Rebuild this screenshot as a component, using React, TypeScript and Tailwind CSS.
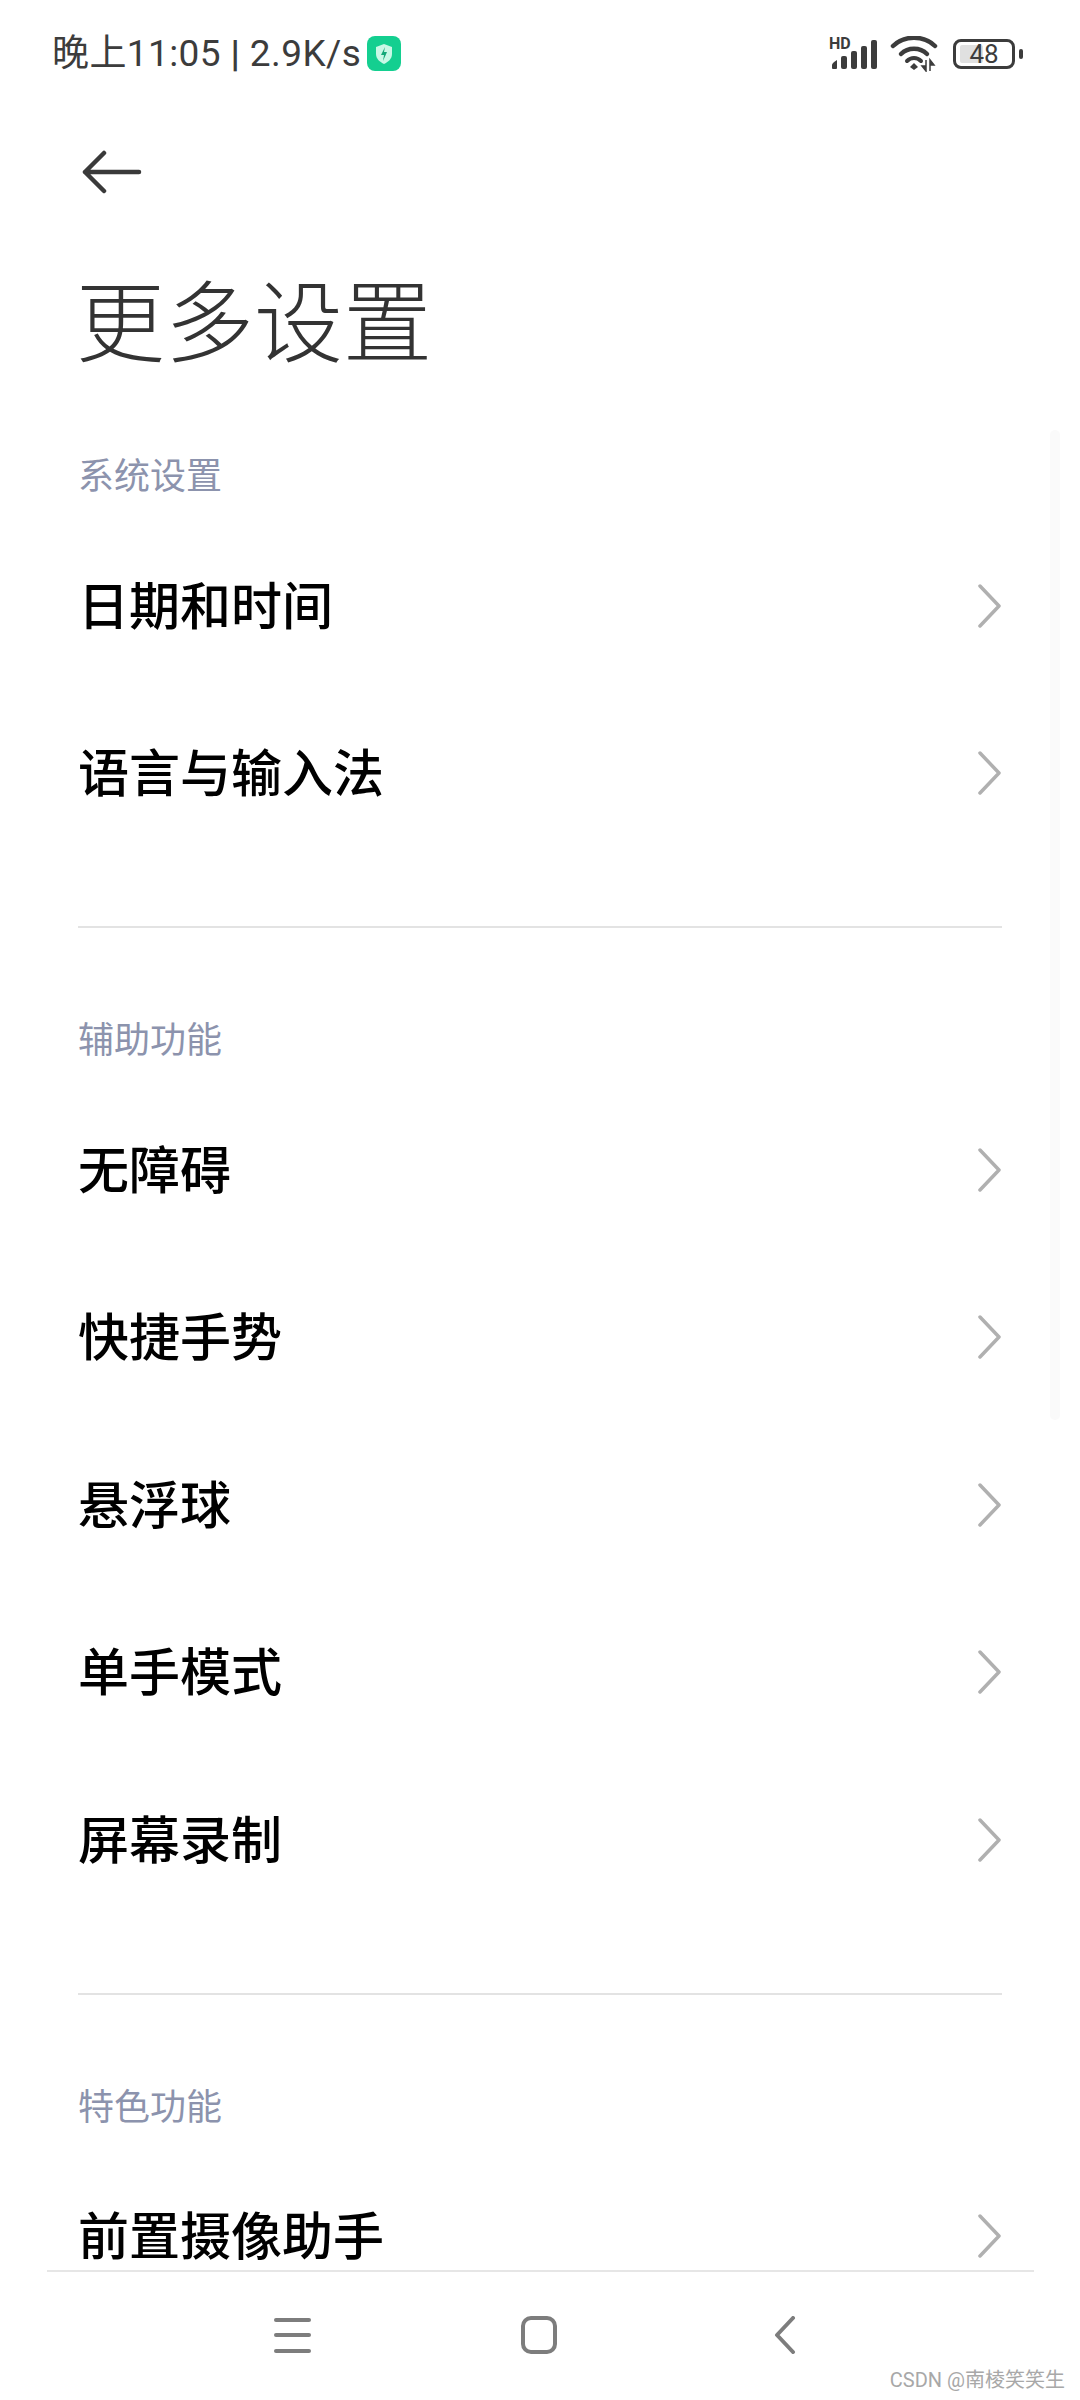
const cjk = "font-['Roboto','Noto_Sans_CJK_SC',sans-serif]";

const sections = [
  { title: '系统设置', items: ['日期和时间', '语言与输入法'] },
  { title: '辅助功能', items: ['无障碍', '快捷手势', '悬浮球', '单手模式', '屏幕录制'] },
  { title: '特色功能', items: ['前置摄像助手'] },
];

function Chevron() {
  return (
    <svg className="mb-[4px] mr-[-1px]" width="24" height="44" viewBox="0 0 24 44" fill="none">
      <path d="M2 2 L21 22 L2 42" stroke="#b0b0b0" strokeWidth="3.5" strokeLinecap="round" strokeLinejoin="round" />
    </svg>
  );
}

function StatusBar() {
  return (
    <div className="flex h-[108px] items-center justify-between pl-[52px] pr-[65px] pb-[1px] text-[#3c3c3c]">
      <div className="flex items-center">
        <span className="text-[37px] leading-none tracking-[0.4px] whitespace-pre">
          晚上11:05 <span className="font-bold">|</span> 2.9K/s
        </span>
        <svg className="ml-[6px]" width="34" height="35" viewBox="0 0 34 35">
          <rect width="34" height="35" rx="8" fill="#14cf90" />
          <path d="M17 8 L25 11 V18 C25 23 21 26 17 28 C13 26 9 23 9 18 V11 Z" fill="#c9f8e6" />
          <path d="M18 11 L14 19 H17 L16 25 L20 16 H17 Z" fill="#14a878" />
        </svg>
      </div>
      <div className="flex items-center">
        <div className="relative h-[34px] w-[54px]">
          <span className="absolute left-[2px] top-[-1px] text-[16px] leading-[16px] font-bold">HD</span>
          <svg width="54" height="34" viewBox="0 0 54 34" fill="#3c3c3c">
            <path d="M5 31 V28 Q5 26 10 23 V31 Q10 32 9 32 H6 Q5 32 5 31 Z" />
            <rect x="14" y="19" width="6" height="13" rx="2" />
            <rect x="24" y="14" width="6" height="18" rx="2" />
            <rect x="34" y="9" width="6" height="23" rx="2" />
            <rect x="44" y="3" width="6" height="29" rx="2" />
          </svg>
        </div>
        <svg className="ml-[9px]" width="48" height="36" viewBox="0 0 48 36" fill="none">
          <path d="M3 10 C14 -1 34 -1 45 10" stroke="#3c3c3c" strokeWidth="4.5" strokeLinecap="round" />
          <path d="M11 18 C18 11 30 11 37 18" stroke="#3c3c3c" strokeWidth="4.5" strokeLinecap="round" />
          <path d="M17 25 C21 21 27 21 31 25" stroke="#3c3c3c" strokeWidth="4" strokeLinecap="round" />
          <path d="M24 27 L28 31 L24 34 L20 31 Z" fill="#3c3c3c" />
          <path d="M36 24 V35 L32 30 H36 Z M40 35 V24 L44 29 H40 Z" fill="#3c3c3c" stroke="#3c3c3c" strokeWidth="1.5" />
        </svg>
        <div className="relative ml-[15px] flex h-[30px] w-[62px] items-center justify-center rounded-[8px] border-[3px] border-[#3c3c3c]">
          <div className="absolute left-[4px] top-[3px] h-[18px] w-[23px] rounded-[2px] bg-[#e0e0e0]" />
          <span className="relative text-[26px] leading-none">48</span>
          <div className="absolute right-[-11px] top-[7px] h-[10px] w-[4px] rounded-[2px] bg-[#3c3c3c]" />
        </div>
      </div>
    </div>
  );
}

export default function App() {
  return (
    <div className={`relative h-[2400px] w-[1080px] overflow-hidden bg-white ${cjk}`}>
      <div className="h-[2270px] overflow-hidden">
        <StatusBar />
        <div className="pl-[82px]">
          <svg width="60" height="44" viewBox="0 0 60 44" fill="none" className="mt-[42px]">
            <path d="M22 3 L3 22 L22 41 M3 22 H57" stroke="#3a3a3a" strokeWidth="4.5" strokeLinecap="round" strokeLinejoin="round" />
          </svg>
        </div>
        <h1 className="mt-[81px] pl-[76px] text-[89px] leading-[100px] font-light text-[#333]">更多设置</h1>
        <div className="mt-[72px] px-[78px]">
          {sections.map((s, i) => (
            <div key={s.title}>
              <div className="mb-[17px] flex h-[60px] items-center text-[36px] text-[#8c93ad]">{s.title}</div>
              {s.items.map((item) => (
                <div key={item} className="flex h-[167.5px] items-center justify-between pr-[1px]">
                  <span className="text-[51px] font-medium text-black">{item}</span>
                  <Chevron />
                </div>
              ))}
              {i < sections.length - 1 && <div className="mt-[67px] mb-[83px] h-[2px] bg-[#e3e3e3]" />}
            </div>
          ))}
        </div>
      </div>

      {/* faint scroll indicator */}
      <div className="absolute left-[1050px] top-[430px] h-[990px] w-[10px] rounded-full bg-[#fafafa]" />

      <div className="mx-[47px] h-[2px] w-[987px] bg-[#e6e6e6]" />
      <div className="flex h-[96px] items-center pt-[30px]">
        <div className="ml-[274px] flex h-[35px] w-[37px] flex-col justify-between">
          <div className="h-[4px] rounded-full bg-[#7d7d7d]" />
          <div className="h-[4px] rounded-full bg-[#7d7d7d]" />
          <div className="h-[4px] rounded-full bg-[#7d7d7d]" />
        </div>
        <div className="ml-[210px] h-[38px] w-[36px] rounded-[10px] border-[4px] border-[#7d7d7d]" />
        <svg className="ml-[217px]" width="22" height="38" viewBox="0 0 22 38" fill="none">
          <path d="M19 2 L3 19 L19 36" stroke="#7d7d7d" strokeWidth="4" strokeLinecap="round" strokeLinejoin="round" />
        </svg>
      </div>
      <div className="absolute right-[15px] bottom-[8px] text-[20px] leading-[24px] text-[#a8a8a8]">CSDN @南棱笑笑生</div>
    </div>
  );
}
